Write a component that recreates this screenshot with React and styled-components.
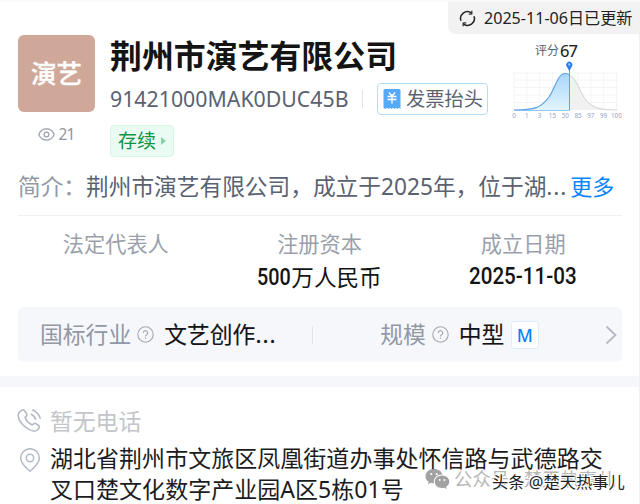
import React from "react";
import styled, { createGlobalStyle } from "styled-components";

const GlobalStyle = createGlobalStyle`
  * {
    box-sizing: border-box;
  }
  body {
    margin: 0;
    background: #fff;
    font-family: "Noto Sans", "Noto Sans CJK SC", sans-serif;
    overflow: hidden;
  }
`;

const StyledPage = styled.main`
  position: relative;
  width: 640px;
  height: 504px;
  overflow: hidden;
  background: #fff;
  border-top: 2px solid #fafafa;
  border-right: 1px solid #f1f1f3;
  white-space: nowrap;
`;

const StyledHeader = styled.header`
  display: flex;
  height: 163px;
`;

const StyledAside = styled.div`
  display: flex;
  flex-direction: column;
  align-items: center;
  width: 77px;
  margin: 33px 15px 0 18px;
`;

const StyledLogo = styled.div`
  width: 77px;
  height: 77px;
  border-radius: 6px;
  background: #cfa899;
  color: #fff;
  font-size: 25.5px;
  font-weight: 500;
  line-height: 76px;
  text-align: center;
  -webkit-text-stroke: 0.3px #fff;
`;

const StyledViews = styled.div`
  display: flex;
  align-items: center;
  gap: 3px;
  margin-top: 12px;
  height: 20px;
  color: #8f96a3;
  font-size: 15.5px;
  line-height: 20px;
  letter-spacing: -0.8px;
`;

const StyledIdentity = styled.div`
  width: 338px;
  padding-top: 32px;
`;

const StyledTitle = styled.h1`
  margin: 0;
  color: #141414;
  font-size: 31.9px;
  font-weight: 700;
  line-height: 43px;
`;

const StyledCodeRow = styled.div`
  display: flex;
  align-items: center;
  height: 32px;
  margin-top: 6px;
`;

const StyledCode = styled.span`
  flex: none;
  width: 240px;
  color: #5a6272;
  font-size: 21.3px;
  line-height: 32px;
`;

const StyledDivider = styled.i`
  flex: none;
  width: 1px;
  height: ${(props) => props.$height}px;
  margin-left: ${(props) => props.$gap || 0}px;
  background: #e2e4e9;
`;

const StyledInvoice = styled.button`
  display: flex;
  align-items: center;
  flex: none;
  gap: 5px;
  width: 111px;
  height: 32px;
  margin-left: 14px;
  padding: 0 0 0 5px;
  border: 1px solid #b4dcfb;
  border-radius: 4px;
  background: #fff;
  color: #5a6272;
  font-family: inherit;
  font-size: 19.3px;
  line-height: 30px;
`;

const StyledStatus = styled.div`
  display: flex;
  align-items: center;
  gap: 5px;
  width: 64px;
  height: 32px;
  margin-top: 10px;
  padding-left: 7px;
  border: 1px solid #d9f7e7;
  border-radius: 4px;
  background: #e9fbf2;
  color: #0d9247;
  font-size: 19px;
  line-height: 32px;
`;

const StyledCorner = styled.div`
  display: flex;
  flex-direction: column;
  align-items: flex-start;
  width: 192px;
`;

const StyledUpdated = styled.div`
  display: flex;
  align-items: center;
  gap: 8px;
  width: 191px;
  height: 32px;
  padding-left: 11px;
  border-bottom-left-radius: 8px;
  background: #f2f2f2;
  color: #222;
  font-size: 16.1px;
  line-height: 33px;
`;

const StyledScore = styled.div`
  display: flex;
  align-items: center;
  gap: 1px;
  height: 24px;
  margin: 4px 0 0 87px;
  color: #5a6272;
  font-size: 12px;
  line-height: 25px;
  b {
    color: #222;
    font-size: 16.5px;
    font-weight: 400;
    letter-spacing: -0.9px;
    -webkit-text-stroke: 0.1px #222;
  }
`;

const StyledChart = styled.svg`
  margin: -4px 0 0 58px;
`;

const StyledIntro = styled.p`
  display: flex;
  margin: 0 18px;
  height: 51px;
  width: 604px;
  border-bottom: 1px solid #f0f1f3;
  color: #5a6272;
  font-size: 22.7px;
  line-height: 43px;
  a {
    margin-left: 3px;
    color: #0a84ff;
    font-size: 22px;
  }
`;

const StyledIntroLabel = styled.span`
  color: #9298a4;
`;

const StyledDots = styled.span`
  letter-spacing: 0.9px;
`;

const StyledFacts = styled.dl`
  display: grid;
  grid-template-columns: repeat(3, 203.7px);
  margin: 12px 0 0 14px;
  height: 79px;
  text-align: center;
`;

const StyledLabel = styled.dt`
  height: 32px;
  color: #9a9fab;
  font-size: 21.2px;
  line-height: 32px;
`;

const StyledValue = styled.dd`
  display: flex;
  justify-content: center;
  margin: 0;
  color: #141414;
  font-size: 22.6px;
  line-height: ${(props) => props.$line || 34}px;
`;

const StyledDigits = styled.span`
  width: ${(props) => props.$width}px;
  font-family: Roboto, sans-serif;
  font-size: 23px;
  font-weight: 500;
  text-align: left;
  transform: scaleX(${(props) => props.$scale});
  transform-origin: 0 50%;
`;

const StyledIndustry = styled.section`
  display: flex;
  align-items: center;
  width: 604px;
  height: 55px;
  margin-left: 18px;
  padding-left: 22px;
  border-radius: 6px;
  background: #f6f7fa;
  font-size: 22.8px;
  line-height: 55px;
  svg {
    flex: none;
  }
`;

const StyledMuted = styled.span`
  color: #9298a4;
  margin-left: ${(props) => props.$gap || 0}px;
  margin-right: 6px;
`;

const StyledStrong = styled.span`
  flex: none;
  width: ${(props) => props.$width}px;
  margin-left: 10px;
  color: #141414;
  -webkit-text-stroke: 0.1px #141414;
`;

const StyledSize = styled.span`
  flex: none;
  width: 28px;
  height: 28px;
  margin: 0 66px 0 6px;
  border: 1px solid #dceefd;
  border-radius: 3px;
  background: #fff;
  color: #0a84ff;
  font-size: 17.5px;
  font-weight: 500;
  line-height: 26px;
  text-align: center;
`;

const StyledBand = styled.div`
  height: 11px;
  margin-top: 14px;
  background: #f6f7fa;
`;

const StyledContact = styled.section`
  display: grid;
  grid-template-columns: 33px 1fr;
  padding: 15px 0 0 17px;
  color: #1c1c1e;
  font-size: 23px;
  line-height: 31px;
  svg {
    margin-top: 6px;
  }
`;

const StyledPhone = styled.div`
  height: 40px;
  color: #c3c5c9;
  font-size: 22.8px;
  line-height: 39px;
`;

const StyledAddress = styled.div`
  padding-top: 1px;
  letter-spacing: 0.03px;
`;

const StyledWechatMark = styled.div`
  position: absolute;
  left: 425px;
  top: 464px;
  display: flex;
  align-items: center;
  gap: 4px;
  color: #a6a6a6;
  font-size: 18.4px;
  line-height: 26px;
  opacity: 0.8;
`;

const StyledToutiaoMark = styled.div`
  position: absolute;
  left: 492px;
  top: 467px;
  color: #222;
  font-size: 16.3px;
  line-height: 26px;
  text-shadow: -1px -1px 0 #fff, 1px -1px 0 #fff, -1px 1px 0 #fff;
`;

const ticks = ["0", "1", "3", "15", "50", "85", "97", "99", "100"];

const HelpIcon = () => (
  <svg width="17" height="17" viewBox="0 0 17 17" fill="none" stroke="#a3a8b2" strokeWidth="1.1">
    <circle cx="8.5" cy="8.5" r="7.7" />
    <path d="M6.3 6.9a2.2 2.2 0 1 1 3.4 1.8c-.8.5-1.2.9-1.2 1.7" />
    <path d="M8.5 11.6v1.3" />
  </svg>
);

const ScoreChart = () => (
  <StyledChart width="125" height="62" viewBox="506 56 125 62">
    <defs>
      <linearGradient id="area" x1="0" y1="0" x2="0" y2="1">
        <stop offset="0" stopColor="#a9d5fb" />
        <stop offset="1" stopColor="#e2f5fe" />
      </linearGradient>
    </defs>
    <g stroke="#f0f1f3" strokeWidth="0.8">
      {[71, 78, 85.5, 93, 100.5].map((y) => (
        <path key={y} d={`M514 ${y}H618`} />
      ))}
      {ticks.map((t, i) => (
        <path key={t} d={`M${514 + i * 12.8} 70V108`} />
      ))}
    </g>
    <path d="M569.5 73C577 77 580 91 586 98C592 105 598 108 617 108H569.5Z" fill="#f2f1f2" />
    <path d="M569.5 73C577 77 580 91 586 98C592 105 598 108 617 108" fill="none" stroke="#d0d1d5" />
    <path d="M514 108C535 108 541 106 549 95C555 86 558 71.5 565 71.5C567 71.5 568.5 72 569.5 73V108Z" fill="url(#area)" />
    <path d="M514 108C535 108 541 106 549 95C555 86 558 71.5 565 71.5C567 71.5 568.5 72 569.5 73" fill="none" stroke="#559ee8" strokeWidth="1.1" />
    <path d="M514 108.5H569" stroke="#7fb8f0" strokeWidth="0.8" />
    <path d="M569.5 66V108.5" stroke="#6f9ee0" strokeWidth="1" />
    <path d="M569.3 69L566.7 64.5A3.1 3.1 0 1 1 571.9 64.5Z" fill="#2d7cf0" />
    <circle cx="569.3" cy="62.5" r="1.2" fill="#8cc1ff" />
    <g fill="#8ea3cc" fontSize="6.2" textAnchor="middle">
      {ticks.map((t, i) => (
        <text key={t} x={514 + i * 12.8} y="116.2">{t}</text>
      ))}
    </g>
  </StyledChart>
);

export default function App() {
  return (
    <>
      <GlobalStyle />
      <StyledPage>
        <StyledHeader>
          <StyledAside>
            <StyledLogo>演艺</StyledLogo>
            <StyledViews>
              <svg width="17" height="13" viewBox="0 0 17 13" fill="none" stroke="#9aa1ad" strokeWidth="1.2">
                <path d="M.8 6.5C3.8 -.9 13.2 -.9 16.2 6.5C13.2 13.9 3.8 13.9 .8 6.5Z" />
                <circle cx="8.5" cy="6.5" r="2.4" />
              </svg>
              21
            </StyledViews>
          </StyledAside>
          <StyledIdentity>
            <StyledTitle>荆州市演艺有限公司</StyledTitle>
            <StyledCodeRow>
              <StyledCode>91421000MAK0DUC45B</StyledCode>
              <StyledDivider $height={18} $gap={12} />
              <StyledInvoice>
                <svg width="18" height="20" viewBox="0 0 18 20">
                  <path d="M2 0H16Q17.5 0 17.5 1.5V20L16 18.7L14.5 20L13 18.7L11.5 20L10 18.7L8.5 20L7 18.7L5.5 20L4 18.7L2.2 20L.5 18.7V1.5Q.5 0 2 0Z" fill="#55a9fa" />
                  <path d="M6 3.5L9 7L12 3.5M4.5 7.5H13.5M4.5 10.5H13.5M9 7V14.5" fill="none" stroke="#fff" strokeWidth="1.4" />
                </svg>
                发票抬头
              </StyledInvoice>
            </StyledCodeRow>
            <StyledStatus>
              存续
              <svg width="5" height="8" viewBox="0 0 5 8">
                <path d="M0 0L5 4L0 8Z" fill="#86cfa9" />
              </svg>
            </StyledStatus>
          </StyledIdentity>
          <StyledCorner>
            <StyledUpdated>
              <svg width="17" height="17" viewBox="0 0 17 17" fill="none" stroke="#222" strokeWidth="1.5">
                <path d="M2 10.8A6.8 6.8 0 0 1 12.3 2.9M15 6.2A6.8 6.8 0 0 1 4.7 14.1" />
                <path d="M12.8 .8V4L9.8 4.2M4.2 16.2V13L7.2 12.8" strokeWidth="1.2" />
              </svg>
              2025-11-06日已更新
            </StyledUpdated>
            <StyledScore>
              评分<b>67</b>
            </StyledScore>
            <ScoreChart />
          </StyledCorner>
        </StyledHeader>
        <StyledIntro>
          <StyledIntroLabel>简介：</StyledIntroLabel>
          荆州市演艺有限公司，成立于2025年，位于湖
          <StyledDots>...</StyledDots>
          <a>更多</a>
        </StyledIntro>
        <StyledFacts>
          <div>
            <StyledLabel>法定代表人</StyledLabel>
          </div>
          <div>
            <StyledLabel>注册资本</StyledLabel>
            <StyledValue $line={36}>
              <StyledDigits $width={34} $scale={0.86}>500</StyledDigits>万人民币
            </StyledValue>
          </div>
          <div>
            <StyledLabel>成立日期</StyledLabel>
            <StyledValue>
              <StyledDigits $width={108} $scale={0.895}>2025-11-03</StyledDigits>
            </StyledValue>
          </div>
        </StyledFacts>
        <StyledIndustry>
          <StyledMuted>国标行业</StyledMuted>
          <HelpIcon />
          <StyledStrong $width={148}>
            文艺创作<StyledDots>...</StyledDots>
          </StyledStrong>
          <StyledDivider $height={18} />
          <StyledMuted $gap={67}>规模</StyledMuted>
          <HelpIcon />
          <StyledStrong $width={46}>中型</StyledStrong>
          <StyledSize>M</StyledSize>
          <svg width="12" height="20" viewBox="0 0 12 20" fill="none" stroke="#b4b9c1" strokeWidth="1.8">
            <path d="M1.5 1.5L10.5 10L1.5 18.5" />
          </svg>
        </StyledIndustry>
        <StyledBand />
        <StyledContact>
          <svg width="25" height="25" viewBox="0 0 25 25" fill="none" stroke="#b3bac6" strokeWidth="1.6" strokeLinecap="round" strokeLinejoin="round">
            <path d="M3.2 3.4L5 2.1Q6.5 1.3 7.6 2.8L9.5 5.6Q10.4 7 9.2 8.2L8.1 9.3C9 12.5 12 15.6 15.3 16.9L16.6 15.8Q17.9 14.9 19.2 15.8L21.7 17.5Q23 18.6 22 20L20.8 21.7C15.8 26.6 .4 15.5 1.3 6.5Q1.6 4.6 3.2 3.4Z" />
            <path d="M14.2 6.3Q17.3 7.5 18.6 11.2M15.7 2Q21.3 4.3 23.2 10.3" />
          </svg>
          <StyledPhone>暂无电话</StyledPhone>
          <svg width="25" height="25" viewBox="0 0 25 25" fill="none" stroke="#b3bac6" strokeWidth="1.5">
            <path d="M13 23.3C10 20.5 3.7 16 3.7 10A9.3 9.3 0 0 1 22.3 10C22.3 16 16 20.5 13 23.3Z" />
            <circle cx="13" cy="10" r="3.7" />
          </svg>
          <StyledAddress>
            湖北省荆州市文旅区凤凰街道办事处怀信路与武德路交
            <br />
            叉口楚文化数字产业园A区5栋01号
          </StyledAddress>
        </StyledContact>
        <StyledWechatMark>
          <svg width="25" height="22" viewBox="0 0 25 22">
            <path d="M9 1C4 1 .5 4.2 .5 8.2C.5 10.5 1.7 12.5 3.6 13.8L2.9 16.2L5.7 14.8C6.8 15.1 7.9 15.3 9 15.2C7.8 9.7 12.5 6.2 17.3 6.5C16.5 3.3 13.2 1 9 1Z" fill="#8c8c8c" />
            <path d="M17 7.5C12.7 7.5 9.8 10.3 9.8 13.8C9.8 18.3 14.5 20.9 19.3 19.7L21.6 20.9L21.1 18.8C23 17.6 24.3 15.9 24.3 13.8C24.3 10.3 21.2 7.5 17 7.5Z" fill="#8c8c8c" />
            <g fill="#fff">
              <circle cx="6.3" cy="6" r="1.1" />
              <circle cx="11.7" cy="6" r="1.1" />
              <circle cx="14.7" cy="11.9" r="1" />
              <circle cx="19.4" cy="11.9" r="1" />
            </g>
          </svg>
          公众号 · 楚天热事儿
        </StyledWechatMark>
        <StyledToutiaoMark>头条 @楚天热事儿</StyledToutiaoMark>
      </StyledPage>
    </>
  );
}
